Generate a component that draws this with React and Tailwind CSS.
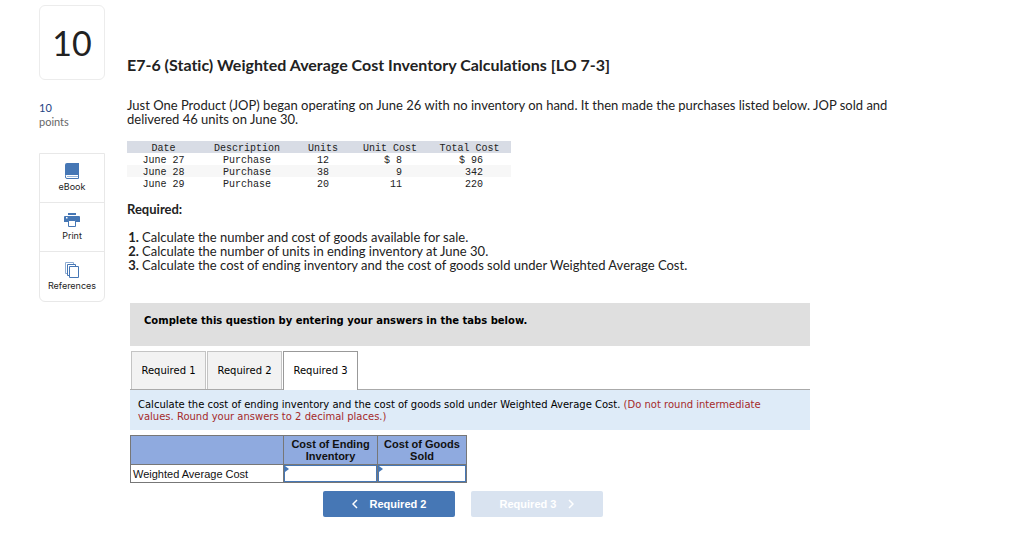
import React, { useState } from "react";

const purchases = [
  { date: "June 27", units: "12", unitCost: "$ 8", totalCost: "$ 96" },
  { date: "June 28", units: "38", unitCost: "9", totalCost: "342" },
  { date: "June 29", units: "20", unitCost: "11", totalCost: "220" },
];

const tabs = ["Required 1", "Required 2", "Required 3"];

const BookIcon = () => (
  <svg width="16" height="18" viewBox="0 0 16 18" aria-hidden="true">
    <path d="M3 1h11v12H3a2 2 0 0 0-2 1V3a2 2 0 0 1 2-2z" fill="#4677b5" />
    <path d="M14.500 1v15.500H3A1.500 1.500 0 0 1 1.500 15v-1.500" fill="none" stroke="#4677b5" />
    <path d="M3 14.500h11" stroke="#9db8d9" />
  </svg>
);

const PrintIcon = () => (
  <svg width="16" height="18" viewBox="0 0 16 18" aria-hidden="true">
    <path d="M4 2h8v2H4zM1 5h14a1 1 0 0 1 1 1v5H0V6a1 1 0 0 1 1-1z" fill="#4677b5" />
    <path d="M4.500 9.500h7v6h-7z" fill="#fff" stroke="#4677b5" />
    <path d="M2 6h1.500v1.500H2z" fill="#fff" />
  </svg>
);

const ReferencesIcon = () => (
  <svg width="16" height="18" viewBox="0 0 16 18" fill="#fff" stroke="#4677b5" aria-hidden="true">
    <path d="M1.500 1.500h8v11h-8z" stroke="#8fadd3" />
    <path d="M3.500 3.500h8v11h-8z" />
    <path d="M5.500 5.500h9v11h-9z" />
  </svg>
);

const tools = [
  { label: "eBook", Icon: BookIcon },
  { label: "Print", Icon: PrintIcon },
  { label: "References", Icon: ReferencesIcon },
];

const Sidebar = () => (
  <aside className="w-[66px] shrink-0">
    <div className="flex h-[75px] items-center justify-center rounded-md border border-[#ececec] font-['Lato',sans-serif] text-[34px] text-[#222]">
      10
    </div>
    <div className="mt-[21px] font-['Lato',sans-serif] text-[11px] leading-[14px]">
      <p className="text-[#1f4484]">10</p>
      <p className="text-[#666]">points</p>
    </div>
    <div className="mt-6 divide-y divide-[#e8e8e8] rounded-b-md border border-[#e8e8e8]">
      {tools.map(({ label, Icon }) => (
        <button
          key={label}
          type="button"
          className="flex h-[49px] w-full flex-col items-center justify-center font-['Inter',sans-serif] text-[9px] leading-[14px] text-[#222]"
        >
          <Icon />
          {label}
        </button>
      ))}
    </div>
  </aside>
);

const PurchaseTable = () => (
  <table className="w-96 table-fixed text-center font-['Liberation_Mono',monospace] text-[10px] leading-2 text-[#222]">
    <colgroup>
      <col className="w-[73px]" />
      <col className="w-[94px]" />
      <col className="w-[58px]" />
      <col className="w-[76px]" />
      <col />
    </colgroup>
    <thead className="bg-[#d8dce5]">
      <tr>
        <th className="pt-1 font-normal">Date</th>
        <th className="pt-1 font-normal">Description</th>
        <th className="pt-1 font-normal">Units</th>
        <th className="pt-1 font-normal">Unit Cost</th>
        <th className="pt-1 font-normal">Total Cost</th>
      </tr>
    </thead>
    <tbody>
      {purchases.map((row) => (
        <tr key={row.date} className="even:bg-[#f7f7f7]">
          <td className="pt-1">{row.date}</td>
          <td className="pt-1">Purchase</td>
          <td className="pt-1">{row.units}</td>
          <td className="pt-1 pr-[26px] text-right">{row.unitCost}</td>
          <td className="pt-1 pr-7 text-right">{row.totalCost}</td>
        </tr>
      ))}
    </tbody>
  </table>
);

const AnswerCell = ({ label }) => (
  <td className="relative border border-[#777] p-0">
    <span className="absolute top-px left-px border-y-3 border-l-4 border-y-transparent border-l-[#4677b5]" />
    <input
      type="text"
      aria-label={label}
      className="block h-[17px] w-full border border-[#4677b5] bg-transparent px-1 text-right outline-none"
    />
  </td>
);

const AnswerTable = () => (
  <table className="mt-[5px] w-[337px] table-fixed border-collapse font-['Liberation_Sans',sans-serif] text-[11px] leading-3 text-[#111]">
    <colgroup>
      <col className="w-[153px]" />
      <col className="w-[94px]" />
      <col />
    </colgroup>
    <thead>
      <tr className="h-[29px] bg-[#8faadf]">
        <td className="border border-[#777]" />
        <th className="border border-[#777]">
          Cost of Ending
          <br />
          Inventory
        </th>
        <th className="border border-[#777]">
          Cost of Goods
          <br />
          Sold
        </th>
      </tr>
    </thead>
    <tbody>
      <tr>
        <th className="border border-[#777] px-0.5 text-left font-normal">Weighted Average Cost</th>
        <AnswerCell label="Cost of Ending Inventory" />
        <AnswerCell label="Cost of Goods Sold" />
      </tr>
    </tbody>
  </table>
);

const Chevron = ({ d }) => (
  <svg width="6" height="10" viewBox="0 0 6 10" fill="none" stroke="currentColor" strokeWidth="1.5" aria-hidden="true">
    <path d={d} />
  </svg>
);

const AnswerPanel = () => {
  const [active, setActive] = useState("Required 3");

  return (
    <section className="mt-[31px] ml-[3px] max-w-[680px] font-['DejaVu_Sans',sans-serif] text-[10px] text-black">
      <div className="h-[43px] bg-[#dfdfdf] px-3.5 pt-[11px] leading-[14px] font-bold">
        Complete this question by entering your answers in the tabs below.
      </div>

      {/* TABS */}
      <div role="tablist" className="mt-[5px] flex gap-px border-b border-[#aaa] pl-px">
        {tabs.map((tab) => (
          <button
            key={tab}
            type="button"
            role="tab"
            aria-selected={active === tab}
            onClick={() => setActive(tab)}
            className={
              active === tab
                ? "-mb-px h-[39px] w-[75px] border border-b-0 border-[#999] bg-white"
                : "h-[38px] w-[75px] border border-b-0 border-[#c4c4c4] bg-[#f2f2f2]"
            }
          >
            {tab}
          </button>
        ))}
      </div>

      <p className="bg-[#deebf8] pt-[9px] pr-6 pb-[7px] pl-2 leading-3">
        Calculate the cost of ending inventory and the cost of goods sold under Weighted Average Cost.{" "}
        <span className="text-[#a52a2a]">(Do not round intermediate values. Round your answers to 2 decimal places.)</span>
      </p>

      <AnswerTable />

      {/* NAVIGATION */}
      <div className="mt-2 ml-[193px] flex gap-4 font-['Liberation_Sans',sans-serif] text-[11px] font-bold text-white">
        <button
          type="button"
          onClick={() => setActive("Required 2")}
          className="flex h-[26px] w-[132px] items-center justify-center gap-3 rounded-xs bg-[#4677b5]"
        >
          <Chevron d="M5 1 1 5l4 4" />
          Required 2
        </button>
        <button
          type="button"
          disabled
          className="flex h-[26px] w-[132px] items-center justify-center gap-3 rounded-xs bg-[#d9e3f0]"
        >
          Required 3
          <Chevron d="m1 1 4 4-4 4" />
        </button>
      </div>
    </section>
  );
};

const App = () => (
  <div className="flex min-h-screen gap-[22px] bg-white pt-[5px] pr-4 pl-[39px]">
    <Sidebar />
    <main className="max-w-[770px] min-w-0 flex-1 pt-[50px] font-['Lato',sans-serif] text-[13px] leading-[14px] text-[#222] [font-variant-ligatures:none]">
      <h1 className="text-[16px] leading-5 font-bold">
        E7-6 (Static) Weighted Average Cost Inventory Calculations [LO 7-3]
      </h1>
      <p className="mt-[23px] mb-[15px]">
        Just One Product (JOP) began operating on June 26 with no inventory on hand. It then made the purchases listed
        below. JOP sold and delivered 46 units on June 30.
      </p>
      <PurchaseTable />
      <h2 className="mt-[13px] font-bold">Required:</h2>
      <ol className="mt-3.5 list-decimal pl-[15px] marker:font-bold">
        <li>Calculate the number and cost of goods available for sale.</li>
        <li>Calculate the number of units in ending inventory at June 30.</li>
        <li>Calculate the cost of ending inventory and the cost of goods sold under Weighted Average Cost.</li>
      </ol>
      <AnswerPanel />
    </main>
  </div>
);

export default App;
